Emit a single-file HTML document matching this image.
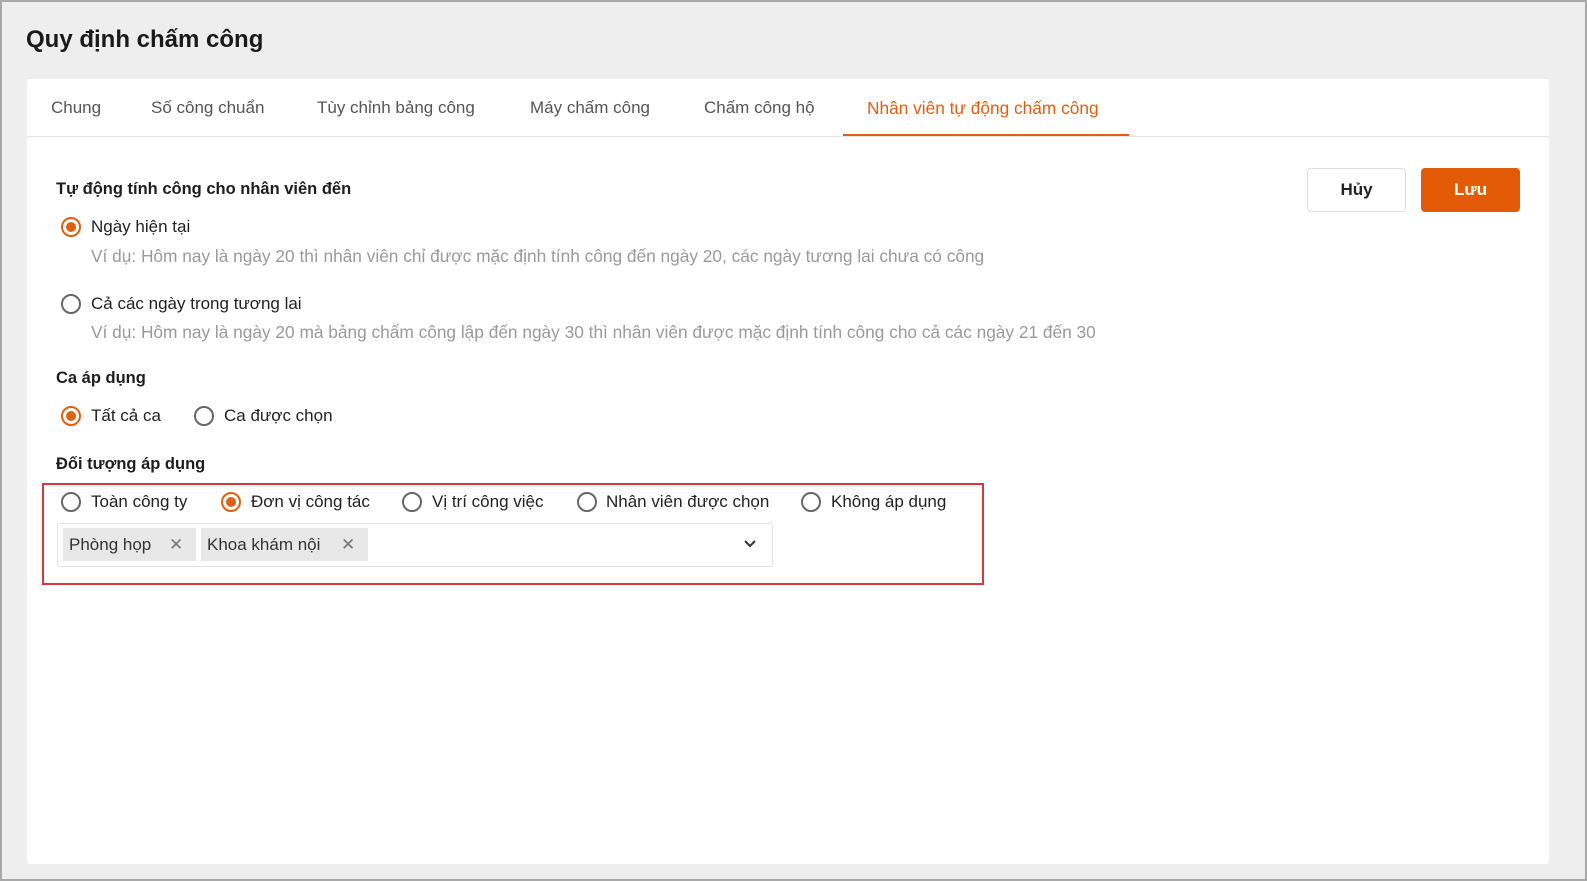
<!DOCTYPE html>
<html><head><meta charset="utf-8"><style>
*{box-sizing:border-box;margin:0;padding:0}
body{width:1587px;height:881px;background:#eeeeee;font-family:"Liberation Sans",sans-serif;color:#222;position:relative;overflow:hidden;border:2px solid #a8a8a8}
.a{position:absolute;white-space:nowrap}
.card{position:absolute;left:25px;top:77px;width:1522px;height:785px;background:#fff;border-radius:3px}
.tab{position:absolute;top:96px;font-size:17px;color:#555}
.h{font-weight:bold;font-size:16.5px;color:#1e1e1e}
.r{position:absolute;width:20px;height:20px;border:2px solid #666;border-radius:50%;background:#fff}
.r.on{border-color:#e35f10}
.r.on::after{content:"";position:absolute;left:3px;top:3px;width:10px;height:10px;border-radius:50%;background:#e35f10}
.l{font-size:17px;color:#222}
.g{font-size:17.3px;color:#9a9a9a}
.chip{position:absolute;top:526px;height:33px;background:#e8e8e8;font-size:17px;line-height:33px;padding-left:6px;color:#333}
</style></head><body>
<div class="a" style="left:24px;top:24px;font-size:24px;font-weight:bold;color:#1a1a1a">Quy định chấm công</div>
<div class="card"></div>
<div style="position:absolute;left:25px;top:134px;width:1522px;height:1px;background:#e6e6e6"></div>
<div class="a tab" style="left:49px">Chung</div>
<div class="a tab" style="left:149px">Số công chuẩn</div>
<div class="a tab" style="left:315px">Tùy chỉnh bảng công</div>
<div class="a tab" style="left:528px">Máy chấm công</div>
<div class="a tab" style="left:702px">Chấm công hộ</div>
<div class="a tab" style="left:865px;color:#e35f10;font-size:17.3px">Nhân viên tự động chấm công</div>
<div style="position:absolute;left:841px;top:132px;width:286px;height:2px;background:#e35f10"></div>

<div class="a" style="left:1305px;top:166px;width:99px;height:44px;border:1px solid #ddd;border-radius:4px;background:#fff;text-align:center;line-height:42px;font-size:17px;font-weight:bold;color:#222">Hủy</div>
<div class="a" style="left:1419px;top:166px;width:99px;height:44px;border-radius:4px;background:#e35b07;text-align:center;line-height:44px;font-size:17px;font-weight:bold;color:#fff">Lưu</div>

<div class="a h" style="left:54px;top:178px">Tự động tính công cho nhân viên đến</div>
<div class="r on" style="left:59px;top:215px"></div>
<div class="a l" style="left:89px;top:215px">Ngày hiện tại</div>
<div class="a g" style="left:89px;top:244px">Ví dụ: Hôm nay là ngày 20 thì nhân viên chỉ được mặc định tính công đến ngày 20, các ngày tương lai chưa có công</div>
<div class="r" style="left:59px;top:292px"></div>
<div class="a l" style="left:89px;top:292px">Cả các ngày trong tương lai</div>
<div class="a g" style="left:89px;top:320px">Ví dụ: Hôm nay là ngày 20 mà bảng chấm công lập đến ngày 30 thì nhân viên được mặc định tính công cho cả các ngày 21 đến 30</div>

<div class="a h" style="left:54px;top:367px">Ca áp dụng</div>
<div class="r on" style="left:59px;top:404px"></div>
<div class="a l" style="left:89px;top:404px">Tất cả ca</div>
<div class="r" style="left:192px;top:404px"></div>
<div class="a l" style="left:222px;top:404px">Ca được chọn</div>

<div class="a h" style="left:54px;top:453px">Đối tượng áp dụng</div>
<div style="position:absolute;left:40px;top:481px;width:942px;height:102px;border:2px solid #d9363e"></div>
<div class="r" style="left:59px;top:490px"></div>
<div class="a l" style="left:89px;top:490px">Toàn công ty</div>
<div class="r on" style="left:219px;top:490px"></div>
<div class="a l" style="left:249px;top:490px">Đơn vị công tác</div>
<div class="r" style="left:400px;top:490px"></div>
<div class="a l" style="left:430px;top:490px">Vị trí công việc</div>
<div class="r" style="left:575px;top:490px"></div>
<div class="a l" style="left:604px;top:490px">Nhân viên được chọn</div>
<div class="r" style="left:799px;top:490px"></div>
<div class="a l" style="left:829px;top:490px">Không áp dụng</div>

<div style="position:absolute;left:55px;top:521px;width:716px;height:44px;border:1px solid #e2e2e2;border-radius:3px"></div>
<div class="chip" style="left:61px;width:133px">Phòng họp<span style="position:absolute;left:106px;color:#777">✕</span></div>
<div class="chip" style="left:199px;width:167px">Khoa khám nội<span style="position:absolute;left:140px;color:#777">✕</span></div>
<svg style="position:absolute;left:741px;top:537px" width="14" height="10" viewBox="0 0 14 10"><path d="M2 2l5 5 5-5" fill="none" stroke="#333" stroke-width="2"/></svg>
</body></html>
